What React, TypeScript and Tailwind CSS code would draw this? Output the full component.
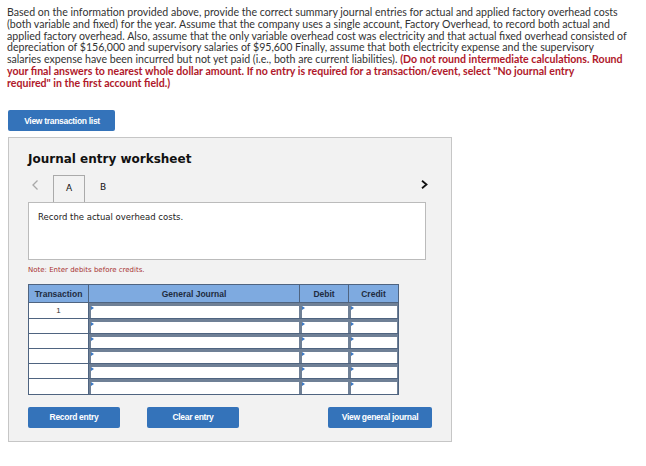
import React from 'react'

const rows = [0, 1, 2, 3, 4, 5]

const Btn = ({ label, className = '' }: { label: string; className?: string }) => (
  <button
    className={`h-[21px] rounded-[2px] bg-[#3473ba] text-[8.5px] font-bold tracking-[-0.3px] text-white ${className}`}
    style={{ fontFamily: '"Liberation Sans", Arial, sans-serif' }}
  >
    {label}
  </button>
)

const InputCell = ({ w }: { w: string }) => (
  <div className={`relative h-full ${w} border-l-2 border-t-[3px] border-r border-[#6f8096] bg-white`}>
    <span className="absolute left-0 top-0 h-0 w-0 border-y-[2px] border-l-[3px] border-y-transparent border-l-[#3b78c4]" />
  </div>
)

export default function App() {
  return (
    <div className="h-[466px] w-[646px] overflow-hidden bg-white">
      <p
        className="px-[7px] pt-[7px] text-[10.6px] leading-[11.8px] text-[#333]"
        style={{ fontFamily: 'Lato, "Open Sans", sans-serif' }}
      >
        Based on the information provided above, provide the correct summary journal entries for actual and applied factory overhead costs
        <br />
        (both variable and fixed) for the year. Assume that the company uses a single account, Factory Overhead, to record both actual and
        <br />
        applied factory overhead. Also, assume that the only variable overhead cost was electricity and that actual fixed overhead consisted of
        <br />
        depreciation of $156,000 and supervisory salaries of $95,600 Finally, assume that both electricity expense and the supervisory
        <br />
        salaries expense have been incurred but not yet paid (i.e., both are current liabilities).{' '}
        <span className="font-bold text-[#b0182a]">
          (Do not round intermediate calculations. Round
          <br />
          your final answers to nearest whole dollar amount. If no entry is required for a transaction/event, select "No journal entry
          <br />
          required" in the first account field.)
        </span>
      </p>

      <div className="ml-[8px] mt-[16px]">
        <Btn label="View transaction list" className="w-[107px] pl-[1px]" />
      </div>

      <div
        className="ml-[8px] mt-[6px] h-[305px] w-[444px] border border-[#c6c6c6] bg-[#f2f2f2] pl-[19px] pt-[13px]"
        style={{ fontFamily: '"DejaVu Sans", Verdana, sans-serif' }}
      >
        <h2 className="text-[12px] font-bold leading-[16px] text-[#111]">Journal entry worksheet</h2>

        <div className="mt-[8px] flex h-[27px] w-[398px] items-end">
          <svg className="mb-[12px] ml-[4px] mr-[15px]" width="6" height="10" viewBox="0 0 6 10">
            <path d="M5.5 0.5 L1 5 L5.5 9.5" fill="none" stroke="#a8a8a8" strokeWidth="1.3" />
          </svg>
          <div className="flex h-[27px] w-[32px] items-center justify-center border-x border-t border-[#aaa] bg-[#f2f2f2] pb-[2px] text-[9px] text-[#111]">
            A
          </div>
          <div className="flex h-[27px] w-[36px] items-center justify-center pb-[2px] text-[9px] text-[#111]">B</div>
          <svg className="mb-[13px] ml-auto mr-[-2px]" width="7" height="9" viewBox="0 0 7 9">
            <path d="M1 0.8 L5.5 4.5 L1 8.2" fill="none" stroke="#111" strokeWidth="1.8" />
          </svg>
        </div>

        <div className="h-[58px] w-[398px] border border-[#bbb] bg-white pl-[9px] pt-[8px] text-[8.5px] text-[#222]">
          Record the actual overhead costs.
        </div>

        <p className="mt-[5px] text-[7px] leading-[10px] text-[#a83232]">Note: Enter debits before credits.</p>

        <div className="mt-[9px] w-[371px] border border-[#4f6480]" style={{ fontFamily: '"Liberation Sans", Arial, sans-serif' }}>
          <div className="flex h-[17px] bg-[#7eaae0] text-[8.5px] font-bold text-[#1e2c40]">
            <div className="flex w-[60px] items-center justify-center border-r border-[#4f6480]">Transaction</div>
            <div className="flex w-[211px] items-center justify-center border-r border-[#4f6480]">General Journal</div>
            <div className="flex w-[49px] items-center justify-center border-r border-[#4f6480]">Debit</div>
            <div className="flex flex-1 items-center justify-center">Credit</div>
          </div>
          {rows.map((r) => (
            <div key={r} className="flex h-[15.2px] border-t border-[#4f6480] bg-white">
              <div className="flex w-[60px] items-center justify-center border-r border-[#4f6480] text-[8px] text-[#333]">
                {r === 0 ? '1' : ''}
              </div>
              <InputCell w="w-[211px]" />
              <InputCell w="w-[49px]" />
              <InputCell w="flex-1" />
            </div>
          ))}
        </div>

        <div className="mt-[12px] flex w-[404px]">
          <Btn label="Record entry" className="w-[92px]" />
          <Btn label="Clear entry" className="ml-[27px] w-[92px]" />
          <Btn label="View general journal" className="ml-auto w-[104px]" />
        </div>
      </div>
    </div>
  )
}
